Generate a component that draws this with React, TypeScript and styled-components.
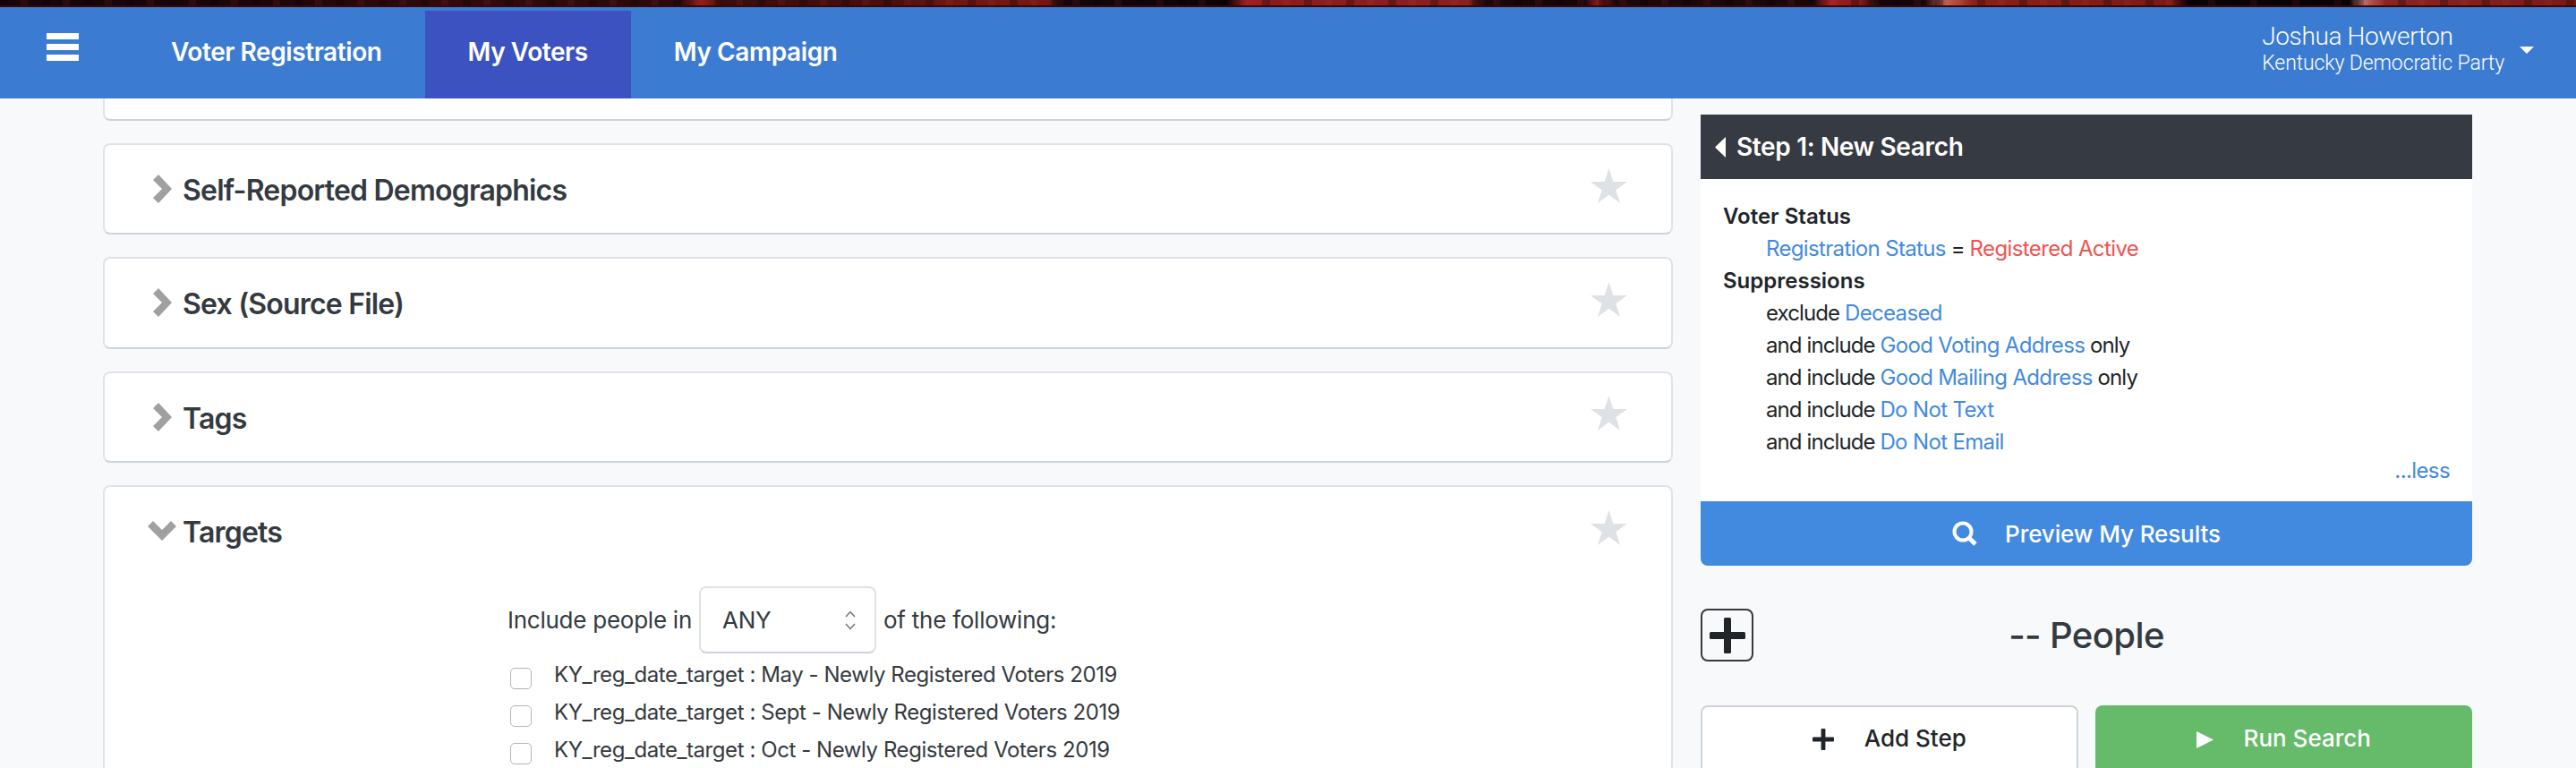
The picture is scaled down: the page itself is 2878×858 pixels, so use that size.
import React from 'react';
import styled, { createGlobalStyle } from 'styled-components';

const GlobalStyle = createGlobalStyle`
    html, body {
        margin: 0;
        height: 100%;
        overflow: hidden;
        background: #f8f9fa;
        font-family: Inter, "Liberation Sans", sans-serif;
        color: #212529;
    }
    * {
        box-sizing: border-box;
    }
`;

const Page = styled.div`
    width: 2878px;
    height: 858px;
    overflow: hidden;
`;

const BannerStrip = styled.div`
    height: 8px;
    border-bottom: 2px solid #3d0505;
    background:
        repeating-linear-gradient(90deg, rgba(0, 0, 0, 0.25) 0 9px, transparent 9px 23px, rgba(255, 80, 60, 0.08) 23px 31px, transparent 31px 47px),
        linear-gradient(90deg,
            #16060a 0, #1c060a 300px, #320a0c 500px, #2a0a0c 760px, #8e2015 785px, #3a0c0c 810px,
            #4a0f0e 1000px, #6e1712 1060px, #751812 1170px, #14060a 1190px, #0c0406 1370px,
            #a02020 1395px, #8a1c1c 1420px, #8a2020 1640px, #1c0808 1660px, #140608 1770px,
            #8a1c18 1785px, #1c0808 1805px, #1a0808 2025px, #a02020 2045px, #801a18 2080px,
            #140608 2095px, #140608 2150px, #c06050 2175px, #8a2018 2205px, #7a1a15 2425px,
            #0a0304 2445px, #0a0304 2625px, #c07068 2640px, #8a2420 2665px, #7a1a18 2878px);
`;

const NavBar = styled.nav`
    display: flex;
    height: 102px;
    background: #3b7cd2;
    color: #fff;
`;

const Hamburger = styled.div`
    display: flex;
    flex-direction: column;
    gap: 5px;
    width: 36px;
    margin: 29px 55px 0 52px;
`;

const HamburgerBar = styled.span`
    display: block;
    height: 7px;
    background: #fff;
`;

const Tab = styled.a<{ $active?: boolean }>`
    align-self: flex-end;
    height: 98px;
    padding: 28px 48px 0;
    font-size: 28px;
    font-weight: 600;
    line-height: 36px;
    letter-spacing: -0.42px;
    background: ${props => props.$active ? '#3b52c0' : 'transparent'};
`;

const UserMenu = styled.div`
    display: flex;
    margin-left: auto;
    padding: 16px 47px 0 0;
    font-family: Roboto, sans-serif;
    font-weight: 300;
`;

const UserName = styled.div`
    font-size: 28px;
    line-height: 34px;
    letter-spacing: -0.37px;
`;

const UserParty = styled.div`
    font-size: 23px;
    line-height: 26px;
    letter-spacing: -0.1px;
`;

const Caret = styled.span`
    width: 0;
    height: 0;
    margin: 28px 0 0 17px;
    border-top: 8px solid #fff;
    border-left: 8px solid transparent;
    border-right: 8px solid transparent;
`;

const Main = styled.main`
    display: flex;
    gap: 31px;
    padding-left: 115px;
`;

const LeftColumn = styled.section`
    display: flex;
    flex-direction: column;
    gap: 25px;
    width: 1754px;
`;

const Card = styled.div<{ $clipped?: boolean }>`
    flex-shrink: 0;
    height: ${props => props.$clipped ? '25px' : 'auto'};
    background: #fff;
    border: 2px solid #dfe3e8;
    border-bottom-color: #cdd3da;
    border-top-width: ${props => props.$clipped ? '0' : '2px'};
    border-radius: ${props => props.$clipped ? '0 0 8px 8px' : '8px'};
`;

const CardHeader = styled.div`
    display: flex;
    align-items: center;
    height: 98.33px;
    padding: 0 49px 0 48px;
`;

const ChevronBox = styled.span`
    display: flex;
    justify-content: center;
    width: 32px;
    margin-right: 7px;
`;

const ChevronSvg = styled.svg`
    display: block;
    fill: #a0a0a0;
`;

const CardTitle = styled.h3`
    margin: 0;
    padding-top: 4px;
    font-size: 32px;
    font-weight: 600;
    line-height: 40px;
    letter-spacing: -0.8px;
    color: #343a40;
`;

const Star = styled.svg`
    display: block;
    margin: -8px 0 0 auto;
    fill: #dee2e6;
`;

const TargetBody = styled.div`
    padding: 13px 0 0 450px;
`;

const IncludeRow = styled.div`
    display: flex;
    align-items: center;
    font-size: 26px;
    letter-spacing: -0.25px;
    color: #343a40;
`;

const SelectBox = styled.div`
    display: flex;
    align-items: center;
    justify-content: space-between;
    width: 198px;
    height: 75px;
    margin: 0 8px;
    padding: 0 20px 0 24px;
    border: 2px solid #dfe3e8;
    border-bottom-color: #cdd3da;
    border-radius: 8px;
`;

const SelectArrows = styled.svg`
    display: block;
    fill: none;
    stroke: #6c757d;
    stroke-width: 1.5;
`;

const TargetList = styled.div`
    margin-top: 6px;
`;

const TargetRow = styled.label`
    display: flex;
    height: 42px;
    font-size: 24px;
    line-height: 36px;
    letter-spacing: -0.43px;
    color: #343a40;
`;

const Checkbox = styled.input`
    appearance: none;
    flex-shrink: 0;
    width: 24px;
    height: 24px;
    margin: 10px 25px 0 3px;
    background: #fff;
    border: 1.5px solid #adb5bd;
    border-radius: 5px;
`;

const RightColumn = styled.aside`
    width: 862px;
    padding-top: 18px;
`;

const StepHeader = styled.div`
    display: flex;
    align-items: center;
    gap: 12px;
    height: 72px;
    padding-left: 16px;
    font-size: 28px;
    font-weight: 600;
    letter-spacing: -0.35px;
    color: #fff;
    background: #363a42;
`;

const StepBody = styled.div`
    height: 360px;
    padding: 24px 25px 0;
    font-size: 24px;
    line-height: 36px;
    letter-spacing: -0.9px;
    background: #fff;
`;

const StepGroup = styled.div`
    font-weight: 600;
    letter-spacing: 0;
`;

const StepLine = styled.div`
    padding-left: 48px;
`;

const FieldLink = styled.span`
    letter-spacing: -0.65px;
    color: #428ae0;
`;

const ValueText = styled.span`
    letter-spacing: -0.6px;
    color: #ef5350;
`;

const LessLink = styled.div`
    margin-top: -4px;
    text-align: right;
    letter-spacing: -0.6px;
    color: #428ae0;
`;

const PreviewButton = styled.button`
    display: flex;
    align-items: center;
    justify-content: center;
    gap: 31px;
    width: 100%;
    height: 72px;
    padding: 0;
    border: 0;
    border-radius: 0 0 8px 8px;
    font: 500 26px Inter, sans-serif;
    letter-spacing: -0.1px;
    color: #fff;
    background: #428ae0;
`;

const CountRow = styled.div`
    display: flex;
    align-items: center;
    margin-top: 48px;
`;

const AddIconButton = styled.div`
    display: flex;
    align-items: center;
    justify-content: center;
    flex-shrink: 0;
    width: 59px;
    height: 59px;
    border: 2px solid #343a40;
    border-radius: 8px;
`;

const PeopleCount = styled.div`
    flex: 1;
    padding-right: 59px;
    font-size: 40px;
    font-weight: 500;
    line-height: 59px;
    letter-spacing: -0.6px;
    text-align: center;
    color: #343a40;
`;

const ActionRow = styled.div`
    display: grid;
    grid-template-columns: 1fr 1fr;
    gap: 19px;
    margin-top: 49px;
`;

const ActionButton = styled.button<{ $primary?: boolean }>`
    display: flex;
    align-items: center;
    justify-content: center;
    gap: 34px;
    height: 76px;
    padding: 0;
    border: ${props => props.$primary ? '0' : '2px solid #cdd3da'};
    border-radius: 8px;
    font: 500 26px Inter, sans-serif;
    color: ${props => props.$primary ? '#fff' : '#212529'};
    background: ${props => props.$primary ? '#66bb6a' : '#fff'};
`;

const ActionLabel = styled.span`
    margin-bottom: 3px;
`;

const PlusIcon: React.FC<{ size: number }> = ({ size }) => (
    <svg width={size} height={size} viewBox="0 0 40 40" fill="#212529">
        <rect x="16" y="0" width="8" height="40" rx="1.5" />
        <rect x="0" y="16" width="40" height="8" rx="1.5" />
    </svg>
);

const ChevronRight = () => (
    <ChevronSvg width="21" height="32" viewBox="0 0 21 32">
        <polygon points="0,6 6,0 21,16 6,32 0,26 10,16" />
    </ChevronSvg>
);

const ChevronDown = () => (
    <ChevronSvg width="32" height="22" viewBox="0 0 32 22">
        <polygon points="0,6 6,0 16,10 26,0 32,6 16,22" />
    </ChevronSvg>
);

interface SectionCardProps {
    title: string;
    open?: boolean;
    children?: React.ReactNode;
}

const SectionCard: React.FC<SectionCardProps> = ({ title, open, children }) => (
    <Card>
        <CardHeader>
            <ChevronBox>{open ? <ChevronDown /> : <ChevronRight />}</ChevronBox>
            <CardTitle>{title}</CardTitle>
            <Star width="41" height="39" viewBox="0 0 41 39">
                <polygon points="20.5,0 25.3,15 41,15 28.3,24.2 33.1,39 20.5,29.8 7.9,39 12.7,24.2 0,15 15.7,15" />
            </Star>
        </CardHeader>
        {children}
    </Card>
);

const targets = [
    'KY_reg_date_target : May - Newly Registered Voters 2019',
    'KY_reg_date_target : Sept - Newly Registered Voters 2019',
    'KY_reg_date_target : Oct - Newly Registered Voters 2019',
];

export default function App() {
    return (
        <Page>
            <GlobalStyle />
            <BannerStrip />
            <NavBar>
                <Hamburger>
                    <HamburgerBar />
                    <HamburgerBar />
                    <HamburgerBar />
                </Hamburger>
                <Tab>Voter Registration</Tab>
                <Tab $active>My Voters</Tab>
                <Tab>My Campaign</Tab>
                <UserMenu>
                    <div>
                        <UserName>Joshua Howerton</UserName>
                        <UserParty>Kentucky Democratic Party</UserParty>
                    </div>
                    <Caret />
                </UserMenu>
            </NavBar>
            <Main>
                <LeftColumn>
                    <Card $clipped />
                    <SectionCard title="Self-Reported Demographics" />
                    <SectionCard title="Sex (Source File)" />
                    <SectionCard title="Tags" />
                    <SectionCard title="Targets" open>
                        <TargetBody>
                            <IncludeRow>
                                Include people in
                                <SelectBox>
                                    ANY
                                    <SelectArrows width="14" height="22" viewBox="0 0 14 22">
                                        <polyline points="2,7 7,1.5 12,7" />
                                        <polyline points="2,15 7,20.5 12,15" />
                                    </SelectArrows>
                                </SelectBox>
                                of the following:
                            </IncludeRow>
                            <TargetList>
                                {targets.map(target => (
                                    <TargetRow key={target}>
                                        <Checkbox type="checkbox" />
                                        {target}
                                    </TargetRow>
                                ))}
                            </TargetList>
                        </TargetBody>
                    </SectionCard>
                </LeftColumn>
                <RightColumn>
                    <StepHeader>
                        <svg width="12" height="23" viewBox="0 0 12 23" fill="#fff">
                            <polygon points="12,0 12,23 0,11.5" />
                        </svg>
                        Step 1: New Search
                    </StepHeader>
                    <StepBody>
                        <StepGroup>Voter Status</StepGroup>
                        <StepLine>
                            <FieldLink>Registration Status</FieldLink> = <ValueText>Registered Active</ValueText>
                        </StepLine>
                        <StepGroup>Suppressions</StepGroup>
                        <StepLine>exclude <FieldLink>Deceased</FieldLink></StepLine>
                        <StepLine>and include <FieldLink>Good Voting Address</FieldLink> only</StepLine>
                        <StepLine>and include <FieldLink>Good Mailing Address</FieldLink> only</StepLine>
                        <StepLine>and include <FieldLink>Do Not Text</FieldLink></StepLine>
                        <StepLine>and include <FieldLink>Do Not Email</FieldLink></StepLine>
                        <LessLink>...less</LessLink>
                    </StepBody>
                    <PreviewButton>
                        <svg width="28" height="28" viewBox="0 0 28 28" fill="none" stroke="#fff">
                            <circle cx="12" cy="12" r="9.5" strokeWidth="4" />
                            <line x1="18.5" y1="18.5" x2="26" y2="26" strokeWidth="5" />
                        </svg>
                        Preview My Results
                    </PreviewButton>
                    <CountRow>
                        <AddIconButton>
                            <PlusIcon size={40} />
                        </AddIconButton>
                        <PeopleCount>-- People</PeopleCount>
                    </CountRow>
                    <ActionRow>
                        <ActionButton>
                            <PlusIcon size={24} />
                            <ActionLabel>Add Step</ActionLabel>
                        </ActionButton>
                        <ActionButton $primary>
                            <svg width="19" height="19" viewBox="0 0 19 19" fill="#fff">
                                <polygon points="0,0 19,9.5 0,19" />
                            </svg>
                            <ActionLabel>Run Search</ActionLabel>
                        </ActionButton>
                    </ActionRow>
                </RightColumn>
            </Main>
        </Page>
    );
}
